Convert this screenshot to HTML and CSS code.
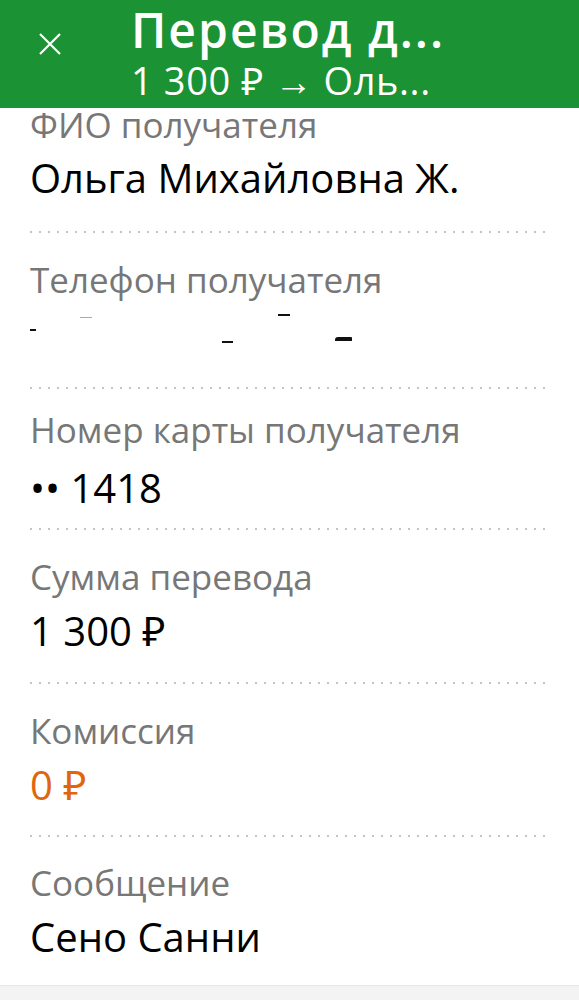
FILE: index.html
```html
<!DOCTYPE html>
<html lang="ru">
<head>
    <meta charset="UTF-8">
    <meta name="viewport" content="width=device-width, initial-scale=1.0">
    <title>Перевод другому клиенту</title>
    <link rel="stylesheet" href="styles.css">
</head>
<body>
    <header class="topbar">
        <button class="close" aria-label="Закрыть">
            <svg width="24" height="24" viewBox="0 0 24 24"><path d="M2 2L22 22M22 2L2 22" stroke="#fff" stroke-width="2.2" fill="none"/></svg>
        </button>
        <div class="titles">
            <div class="title">Перевод д...</div>
            <div class="subtitle">1 300 ₽ → Оль...</div>
        </div>
    </header>

    <main class="details">
        <div class="row first">
            <div class="label">ФИО получателя</div>
            <div class="value">Ольга Михайловна Ж.</div>
        </div>
        <div class="row phone">
            <div class="label">Телефон получателя</div>
            <div class="value hidden-phone">
                <span class="speck s1"></span>
                <span class="speck s2"></span>
                <span class="speck s3"></span>
                <span class="speck s4"></span>
                <span class="speck s5"></span>
            </div>
        </div>
        <div class="row card">
            <div class="label">Номер карты получателя</div>
            <div class="value">•• 1418</div>
        </div>
        <div class="row sum">
            <div class="label">Сумма перевода</div>
            <div class="value">1 300 ₽</div>
        </div>
        <div class="row fee-row">
            <div class="label">Комиссия</div>
            <div class="value fee">0 ₽</div>
        </div>
        <div class="row last">
            <div class="label">Сообщение</div>
            <div class="value">Сено Санни</div>
        </div>
    </main>
</body>
</html>
```
FILE: styles.css
```css
body { margin: 0; font-family: "Open Sans", "Noto Sans", sans-serif; background: #f3f3f3; width: 579px; height: 1000px; overflow: hidden; }

.topbar { background: #1b9233; height: 108px; display: flex; align-items: flex-start; color: #fff; }
.close { background: none; border: 0; padding: 0; width: 24px; height: 24px; margin: 32px 0 0 38px; display: flex; }
.titles { margin-left: 69px; white-space: nowrap; padding-top: 4px; }
.title { font-size: 48px; font-weight: 600; line-height: 52px; letter-spacing: 2px; }
.subtitle { font-size: 38px; line-height: 42px; margin-top: 3px; letter-spacing: 0.6px; }

.details { background: #fff; padding: 0 31px 0 30px; border-bottom: 1px solid #e6e6e6; }
.row { padding: 22px 0 31px; background: linear-gradient(to right, #c4c4c4 2px, transparent 2px) 0 100% / 9px 2px repeat-x; }
.row.first { padding-top: 0; padding-bottom: 31px; }
.row.first .label { line-height: 34px; margin-bottom: 12px; }
.row.phone { padding-top: 25px; }
.row.card { padding-top: 19px; padding-bottom: 18px; }
.row.card .label { margin-bottom: 12px; }
.row.sum { padding-top: 25px; padding-bottom: 29px; }
.row.fee-row { padding-top: 25px; padding-bottom: 28px; }
.row.last { background: none; padding-top: 24px; padding-bottom: 24px; }

.label { font-size: 35px; line-height: 44px; color: #777; margin-bottom: 8px; white-space: nowrap; }
.value { font-size: 40px; line-height: 48px; color: #000; white-space: nowrap; }
.fee { color: #e0650f; }

.hidden-phone { height: 48px; position: relative; }
.speck { position: absolute; background: #111; height: 2px; }
.s1 { left: 0; top: 19px; width: 6px; }
.s2 { left: 50px; top: 7px; width: 12px; height: 1px; background: #aaa; }
.s3 { left: 192px; top: 31px; width: 11px; }
.s4 { left: 248px; top: 4px; width: 12px; }
.s5 { left: 305px; top: 27px; width: 17px; height: 4px; border-radius: 3px 1px 0 0; }
```
